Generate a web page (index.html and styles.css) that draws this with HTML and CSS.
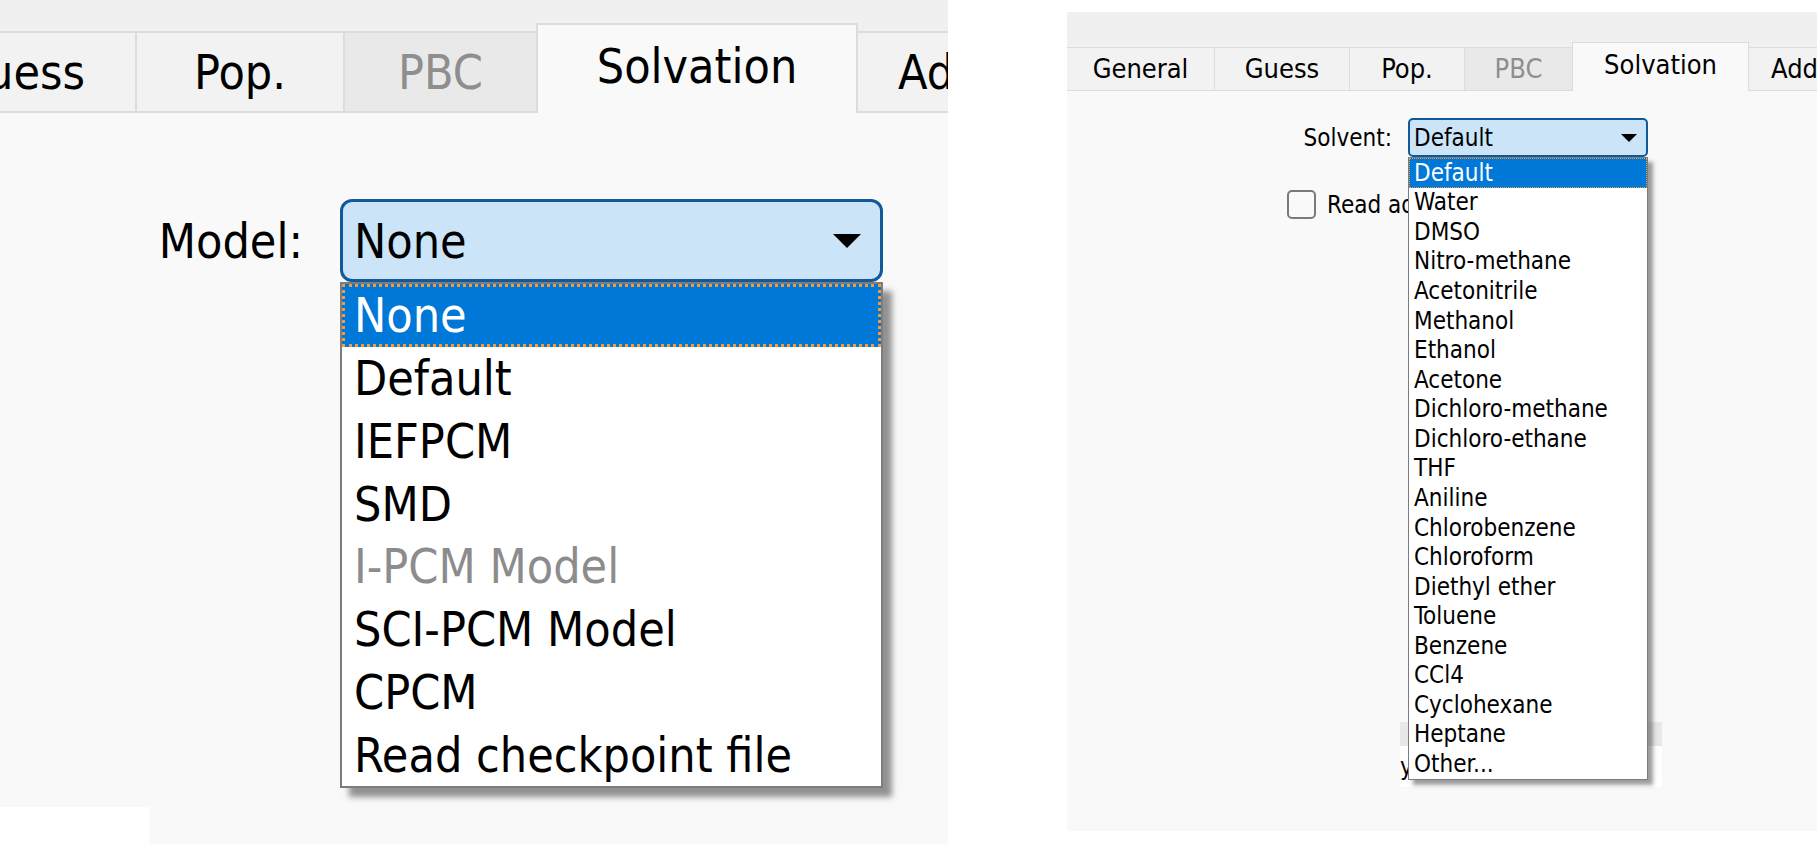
FILE: index.html
```html
<!DOCTYPE html>
<html>
<head>
<meta charset="utf-8">
<link rel="stylesheet" href="styles.css">
</head>
<body>
<div class="screen">
  <section class="panel panel-big">
    <div class="tabbar">
      <div class="tab tab-guess">Guess</div>
      <div class="tab tab-pop">Pop.</div>
      <div class="tab tab-pbc disabled">PBC</div>
      <div class="tab tab-solv active">Solvation</div>
      <div class="tab tab-add">Additional</div>
    </div>
    <div class="content">
      <div class="form">
        <div class="label">Model:</div>
        <div class="combo-wrap">
          <div class="combo"><span>None</span><svg class="arrow" viewBox="0 0 28 14"><polygon points="0,0 28,0 14,14" fill="#000"/></svg></div>
          <ul class="list">
            <li class="item current">None</li>
            <li class="item">Default</li>
            <li class="item">IEFPCM</li>
            <li class="item">SMD</li>
            <li class="item disabled">I-PCM Model</li>
            <li class="item">SCI-PCM Model</li>
            <li class="item">CPCM</li>
            <li class="item">Read checkpoint file</li>
          </ul>
        </div>
      </div>
      <div class="bottom-strip"><div class="white-box"></div></div>
    </div>
  </section>

  <section class="panel panel-small">
    <div class="tabbar">
      <div class="tab tab-general">General</div>
      <div class="tab tab-guess">Guess</div>
      <div class="tab tab-pop">Pop.</div>
      <div class="tab tab-pbc disabled">PBC</div>
      <div class="tab tab-solv active">Solvation</div>
      <div class="tab tab-add">Additional</div>
    </div>
    <div class="content">
      <div class="form">
        <div class="label">Solvent:</div>
        <div class="combo-wrap">
          <div class="combo"><span>Default</span><svg class="arrow" viewBox="0 0 16 8"><polygon points="0,0 16,0 8,8" fill="#000"/></svg></div>
          <ul class="list">
            <li class="item current">Default</li>
            <li class="item">Water</li>
            <li class="item">DMSO</li>
            <li class="item">Nitro-methane</li>
            <li class="item">Acetonitrile</li>
            <li class="item">Methanol</li>
            <li class="item">Ethanol</li>
            <li class="item">Acetone</li>
            <li class="item">Dichloro-methane</li>
            <li class="item">Dichloro-ethane</li>
            <li class="item">THF</li>
            <li class="item">Aniline</li>
            <li class="item">Chlorobenzene</li>
            <li class="item">Chloroform</li>
            <li class="item">Diethyl ether</li>
            <li class="item">Toluene</li>
            <li class="item">Benzene</li>
            <li class="item">CCl4</li>
            <li class="item">Cyclohexane</li>
            <li class="item">Heptane</li>
            <li class="item">Other...</li>
          </ul>
        </div>
      </div>
      <div class="check-row">
        <span class="checkbox"></span>
        <span class="check-label">Read additional input</span>
      </div>
      <div class="table">
        <div class="table-head"></div>
        <div class="table-cell">yes</div>
      </div>
    </div>
  </section>
</div>
</body>
</html>
```

FILE: styles.css
```css
html, body {
  margin: 0;
  padding: 0;
  background: #ffffff;
}

body {
  width: 1817px;
  height: 844px;
  overflow: hidden;
  font-family: "DejaVu Sans Condensed", "DejaVu Sans", sans-serif;
  font-stretch: condensed;
  color: #000;
}

.screen {
  display: flex;
  align-items: flex-start;
  height: 844px;
}

.panel {
  background: #f0f0f0;
  display: flex;
  flex-direction: column;
  overflow: hidden;
  box-sizing: border-box;
}

/* ---------- big (zoomed) panel ---------- */
.panel-big {
  width: 948px;
  height: 844px;
  font-size: 48px;
}

.tabbar {
  display: flex;
  align-items: flex-end;
  flex: none;
}

.tab {
  box-sizing: border-box;
  flex: none;
  display: flex;
  align-items: center;
  justify-content: center;
  background: #f2f2f2;
  white-space: nowrap;
  overflow: hidden;
}

.tab.disabled {
  background: #e9e9e9;
  color: #8e8e8e;
}

.tab.active {
  background: #f9f9f9;
  position: relative;
  z-index: 1;
}

.panel-big .tabbar {
  height: 113px;
}

.panel-big .tab {
  height: 82px;
  border: 2px solid #dcdcdc;
  border-right: none;
  padding-bottom: 0;
}

.panel-big .tab.active {
  height: 90px;
  border-right: 2px solid #dcdcdc;
  border-bottom: none;
  margin-right: -2px;
  padding-bottom: 6px;
}

.panel-big .tab-guess { width: 207px; margin-left: -72px; justify-content: flex-end; padding-right: 50px; }
.panel-big .tab-pop { width: 208px; }
.panel-big .tab-pbc { width: 193px; }
.panel-big .tab-solv { width: 322px; }
.panel-big .tab-add { width: 208px; justify-content: flex-start; padding-left: 40px; }

.content {
  flex: 1;
  background: #f9f9f9;
  display: flex;
  flex-direction: column;
}

.form {
  display: grid;
  align-items: center;
}

.label {
  text-align: right;
  white-space: nowrap;
}

.combo-wrap {
  position: relative;
}

.combo {
  box-sizing: border-box;
  display: flex;
  align-items: center;
  justify-content: space-between;
  background: #cce4f7;
  border-style: solid;
  border-color: #12599b;
  white-space: nowrap;
}

.list {
  position: absolute;
  left: 0;
  top: 100%;
  margin: 0;
  padding: 0;
  list-style: none;
  background: #ffffff;
  border-style: solid;
  border-color: #7c7c7c;
  box-sizing: border-box;
  z-index: 5;
}

.item {
  box-sizing: border-box;
  display: flex;
  align-items: center;
  white-space: nowrap;
}

.item.current {
  background: #0078d7;
  color: #ffffff;
  outline-style: dotted;
  outline-color: #f39a3c;
}

.item.disabled {
  color: #8c8c8c;
}

.panel-big .form {
  margin-top: 86px;
  grid-template-columns: 303px 543px;
  column-gap: 37px;
}

.panel-big .combo {
  height: 83px;
  border-width: 3px;
  border-radius: 12px;
  padding: 0 19px 0 11px;
}

.panel-big .arrow {
  width: 28px;
  height: 14px;
}

.panel-big .list {
  width: 543px;
  border-width: 2px;
  box-shadow: 9px 9px 6px rgba(60, 60, 60, 0.55);
}

.panel-big .item {
  height: 62.75px;
  padding-left: 12px;
}

.panel-big .item.current {
  outline-width: 3px;
  outline-offset: -3px;
}

.bottom-strip {
  margin-top: auto;
  height: 37px;
  display: flex;
}

.white-box {
  width: 149px;
  background: #ffffff;
}

/* ---------- small panel ---------- */
.panel-small {
  width: 750px;
  height: 819px;
  margin-top: 12px;
  margin-left: 119px;
  font-size: 24px;
}

.panel-small .tabbar {
  height: 79px;
  font-size: 27px;
}

.panel-small .tab {
  height: 44px;
  border: 1px solid #dcdcdc;
  border-right: none;
  padding-bottom: 1px;
}

.panel-small .tab.active {
  height: 49px;
  border-right: 1px solid #dcdcdc;
  border-bottom: none;
  margin-right: -1px;
  padding-bottom: 6px;
}

.panel-small .tab-general { width: 147px; border-left: none; }
.panel-small .tab-guess { width: 135px; }
.panel-small .tab-pop { width: 115px; }
.panel-small .tab-pbc { width: 108px; }
.panel-small .tab-solv { width: 177px; }
.panel-small .tab-add { width: 130px; justify-content: flex-start; padding-left: 22px; }

.panel-small .form {
  margin-top: 27px;
  grid-template-columns: 325px 240px;
  column-gap: 16px;
}

.panel-small .combo {
  height: 39px;
  border-width: 2px;
  border-radius: 5px;
  padding: 0 9px 0 4px;
}

.panel-small .arrow {
  width: 16px;
  height: 8px;
}

.panel-small .list {
  width: 240px;
  border-width: 1px;
  box-shadow: 5px 5px 4px rgba(60, 60, 60, 0.5);
}

.panel-small .item {
  height: 29.57px;
  padding-left: 5px;
}

.panel-small .item.current {
  outline-width: 1px;
  outline-offset: -1px;
}

.check-row {
  margin-top: 33px;
  padding-left: 220px;
  display: flex;
  align-items: center;
  gap: 11px;
  height: 29px;
}

.checkbox {
  box-sizing: border-box;
  width: 29px;
  height: 29px;
  border: 2px solid #7a7a7a;
  border-radius: 5px;
  background: #f9f9f9;
}

.check-label {
  white-space: nowrap;
}

.table {
  margin-top: 503px;
  margin-left: 333px;
  width: 262px;
}

.table-head {
  height: 24px;
  background: #e8e8e8;
}

.table-cell {
  height: 41px;
  background: #ffffff;
  display: flex;
  align-items: center;
  padding-left: 0;
  white-space: nowrap;
  overflow: hidden;
}
```
